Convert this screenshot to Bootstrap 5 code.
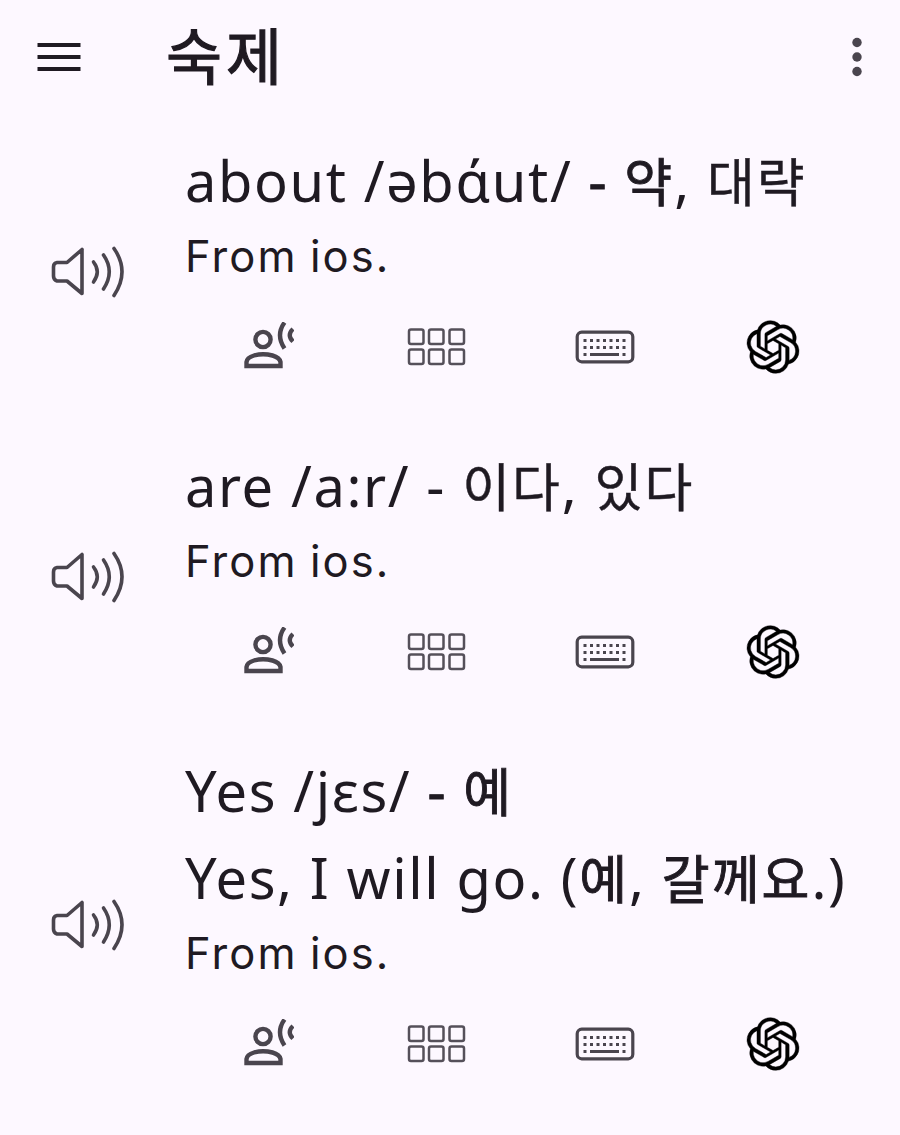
<!DOCTYPE html>
<html lang="ko">
<head>
  <meta charset="UTF-8">
  <title>숙제</title>
  <meta name="viewport" content="width=device-width, initial-scale=1" />
  <link href="https://cdn.jsdelivr.net/npm/bootstrap@5.3.0/dist/css/bootstrap.min.css" rel="stylesheet">
  <style>
    body {
      background-color: #fdf8ff;
      color: #1f1a22;
      font-family: "Noto Sans", "Noto Sans CJK KR", sans-serif;
    }

    svg {
      display: block;
    }

    .app-bar {
      height: 119px;
      padding: 0 36px 5px 37px;
    }

    .app-title {
      font-family: "Noto Sans CJK KR", sans-serif;
      font-size: 61px;
      font-weight: 400;
      -webkit-text-stroke: 1.2px #1f1a22;
      line-height: 1;
      letter-spacing: 4px;
      margin: 0 0 8px 85px;
    }

    .word-item {
      padding: 18px 43px 18px 51px;
    }

    .speak-btn {
      width: 134px;
    }

    .word-line {
      font-size: 56px;
      line-height: 87px;
      letter-spacing: 1.6px;
      white-space: nowrap;
    }

    .word-line .ko {
      font-family: "Noto Sans CJK KR", sans-serif;
      font-size: 52px;
      line-height: 1;
      letter-spacing: 2px;
      -webkit-text-stroke: .4px #1f1a22;
    }

    .word-line .ko-bold {
      -webkit-text-stroke: .9px #1f1a22;
    }

    .word-source {
      font-family: Inter, sans-serif;
      font-size: 43.5px;
      line-height: 64px;
      letter-spacing: 2.1px;
      word-spacing: -2px;
    }

    .word-actions {
      height: 118px;
      padding-bottom: 1px;
    }

    .btn-plain {
      background: none;
      border: 0;
      padding: 0;
      color: #4a454e;
    }
  </style>
</head>
<body>

<!-- Shared icons -->
<svg class="d-none">
  <symbol id="ic-speaker" viewBox="0 0 74 52">
    <g fill="none" stroke="#4a454e" stroke-width="3.6" stroke-linecap="round" stroke-linejoin="round">
      <path d="M31 3.500V47.500L16 35H6Q2.500 34 2.500 30V21Q2.500 17 6 16.500H16L31 3.500"/>
      <path d="M42.500 16Q50 25.500 42.500 36"/>
      <path d="M52.500 9Q64 25.500 52.500 43"/>
      <path d="M63 2.500Q79 25.500 63 49.500"/>
    </g>
  </symbol>
  <symbol id="ic-voice" viewBox="0 0 50 50">
    <g fill="none" stroke="#4a454e" stroke-width="4.400">
      <circle cx="19" cy="17.500" r="7.600"/>
      <path d="M2.500 44V40Q3 35.500 10 33.500Q19 31 28.500 33.500Q35.500 35.500 36.500 40V44Z"/>
      <path d="M40.500 .5Q31.500 13 40.500 26.500"/>
      <path d="M49 7Q42.500 13 49 19.500"/>
    </g>
  </symbol>
  <symbol id="ic-grid" viewBox="0 0 60 40">
    <g fill="none" stroke="#55505a" stroke-width="2.500">
      <rect x="2" y="2.500" width="14.500" height="14.500" rx="2"/>
      <rect x="22" y="2.500" width="14.500" height="14.500" rx="2"/>
      <rect x="42.500" y="2.500" width="14.500" height="14.500" rx="2"/>
      <rect x="2" y="22.500" width="14.500" height="14.500" rx="2"/>
      <rect x="22" y="22.500" width="14.500" height="14.500" rx="2"/>
      <rect x="42.500" y="22.500" width="14.500" height="14.500" rx="2"/>
    </g>
  </symbol>
  <symbol id="ic-keyboard" viewBox="0 0 60 34">
    <rect x="2.200" y="2.200" width="55.600" height="29.600" rx="4.500" fill="none" stroke="#4a454e" stroke-width="3.200"/>
    <g stroke="#4a454e" stroke-width="3" fill="none">
      <path d="M8.500 10.500H52" stroke-dasharray="3 3.500"/>
      <path d="M8.500 17.500H52" stroke-dasharray="3 3.500"/>
      <path d="M8.500 24.500H11.500M15 24.500H44M47.500 24.500H50.500"/>
    </g>
  </symbol>
  <symbol id="ic-gpt" viewBox="-0.3 -0.3 24.6 24.6">
    <path fill="#000" stroke="#000" stroke-width=".2" d="M22.2819 9.8211a5.9847 5.9847 0 0 0-.5157-4.9108 6.0462 6.0462 0 0 0-6.5098-2.9A6.0651 6.0651 0 0 0 4.9807 4.1818a5.9847 5.9847 0 0 0-3.9977 2.9 6.0462 6.0462 0 0 0 .7427 7.0966 5.98 5.98 0 0 0 .511 4.9107 6.051 6.051 0 0 0 6.5146 2.9001A5.9847 5.9847 0 0 0 13.2599 24a6.0557 6.0557 0 0 0 5.7718-4.2058 5.9894 5.9894 0 0 0 3.9977-2.9001 6.0557 6.0557 0 0 0-.7475-7.0729zm-9.022 12.6081a4.4755 4.4755 0 0 1-2.8764-1.0408l.1419-.0804 4.7783-2.7582a.7948.7948 0 0 0 .3927-.6813v-6.7369l2.02 1.1686a.071.071 0 0 1 .038.052v5.5826a4.504 4.504 0 0 1-4.4945 4.4944zm-9.6607-4.1254a4.4708 4.4708 0 0 1-.5346-3.0137l.142.0852 4.783 2.7582a.7712.7712 0 0 0 .7806 0l5.8428-3.3685v2.3324a.0804.0804 0 0 1-.0332.0615L9.74 19.9502a4.4992 4.4992 0 0 1-6.1408-1.6464zM2.3408 7.8956a4.485 4.485 0 0 1 2.3655-1.9728V11.6a.7664.7664 0 0 0 .3879.6765l5.8144 3.3543-2.0201 1.1685a.0757.0757 0 0 1-.071 0l-4.8303-2.7865A4.504 4.504 0 0 1 2.3408 7.872zm16.5963 3.8558L13.1038 8.364 15.1192 7.2a.0757.0757 0 0 1 .071 0l4.8303 2.7913a4.4944 4.4944 0 0 1-.6765 8.1042v-5.6772a.79.79 0 0 0-.407-.667zm2.0107-3.0231l-.142-.0852-4.7735-2.7818a.7759.7759 0 0 0-.7854 0L9.409 9.2297V6.8974a.0662.0662 0 0 1 .0284-.0615l4.8303-2.7866a4.4992 4.4992 0 0 1 6.6802 4.66zM8.3065 12.863l-2.02-1.1638a.0804.0804 0 0 1-.038-.0567V6.0742a4.4992 4.4992 0 0 1 7.3757-3.4537l-.142.0805L8.704 5.459a.7948.7948 0 0 0-.3927.6813zm1.0976-2.3654l2.602-1.4998 2.6069 1.4998v2.9994l-2.5974 1.4997-2.6067-1.4997Z"/>
  </symbol>
</svg>

<!-- App bar -->
<header class="app-bar d-flex align-items-center">
  <button class="btn-plain" type="button" aria-label="Menu">
    <svg width="44" height="30" viewBox="0 0 44 30" stroke="#1f1a22" stroke-width="4">
      <path d="M.5 3H43.500M.5 15H43.500M.5 27H43.500"/>
    </svg>
  </button>
  <h1 class="app-title">숙제</h1>
  <button class="btn-plain ms-auto" type="button" aria-label="More">
    <svg width="14" height="40" viewBox="0 0 14 40" fill="#4a454e">
      <circle cx="7" cy="5.500" r="4.700"/>
      <circle cx="7" cy="20" r="4.700"/>
      <circle cx="7" cy="34.500" r="4.700"/>
    </svg>
  </button>
</header>

<!-- Word list -->
<main>
  <div class="word-item d-flex align-items-center">
    <button class="btn-plain speak-btn flex-shrink-0" type="button" aria-label="Play"><svg width="74" height="52"><use href="#ic-speaker"/></svg></button>
    <div class="flex-grow-1">
      <div class="word-line">about /əbάut/ <span class="ko-bold">-</span> <span class="ko ko-bold">약</span>, <span class="ko">대략</span></div>
      <div class="word-source">From ios.</div>
      <div class="word-actions row g-0 align-items-center">
        <div class="col-3 d-flex justify-content-center"><svg width="50" height="50"><use href="#ic-voice"/></svg></div>
        <div class="col-3 d-flex justify-content-center"><svg width="60" height="40"><use href="#ic-grid"/></svg></div>
        <div class="col-3 d-flex justify-content-center"><svg width="60" height="34"><use href="#ic-keyboard"/></svg></div>
        <div class="col-3 d-flex justify-content-center"><svg width="54" height="54"><use href="#ic-gpt"/></svg></div>
      </div>
    </div>
  </div>

  <div class="word-item d-flex align-items-center">
    <button class="btn-plain speak-btn flex-shrink-0" type="button" aria-label="Play"><svg width="74" height="52"><use href="#ic-speaker"/></svg></button>
    <div class="flex-grow-1">
      <div class="word-line">are /a:r/ - <span class="ko">이다</span>, <span class="ko">있다</span></div>
      <div class="word-source">From ios.</div>
      <div class="word-actions row g-0 align-items-center">
        <div class="col-3 d-flex justify-content-center"><svg width="50" height="50"><use href="#ic-voice"/></svg></div>
        <div class="col-3 d-flex justify-content-center"><svg width="60" height="40"><use href="#ic-grid"/></svg></div>
        <div class="col-3 d-flex justify-content-center"><svg width="60" height="34"><use href="#ic-keyboard"/></svg></div>
        <div class="col-3 d-flex justify-content-center"><svg width="54" height="54"><use href="#ic-gpt"/></svg></div>
      </div>
    </div>
  </div>

  <div class="word-item d-flex align-items-center">
    <button class="btn-plain speak-btn flex-shrink-0" type="button" aria-label="Play"><svg width="74" height="52"><use href="#ic-speaker"/></svg></button>
    <div class="flex-grow-1">
      <div class="word-line">Yes /jɛs/ <span class="ko-bold">-</span> <span class="ko ko-bold">예</span></div>
      <div class="word-line">Yes, I will go. (<span class="ko ko-bold">예</span>, <span class="ko ko-bold">갈께요</span>.)</div>
      <div class="word-source">From ios.</div>
      <div class="word-actions row g-0 align-items-center">
        <div class="col-3 d-flex justify-content-center"><svg width="50" height="50"><use href="#ic-voice"/></svg></div>
        <div class="col-3 d-flex justify-content-center"><svg width="60" height="40"><use href="#ic-grid"/></svg></div>
        <div class="col-3 d-flex justify-content-center"><svg width="60" height="34"><use href="#ic-keyboard"/></svg></div>
        <div class="col-3 d-flex justify-content-center"><svg width="54" height="54"><use href="#ic-gpt"/></svg></div>
      </div>
    </div>
  </div>
</main>

<script src="https://cdn.jsdelivr.net/npm/bootstrap@5.3.0/dist/js/bootstrap.bundle.min.js"></script>
</body>
</html>
